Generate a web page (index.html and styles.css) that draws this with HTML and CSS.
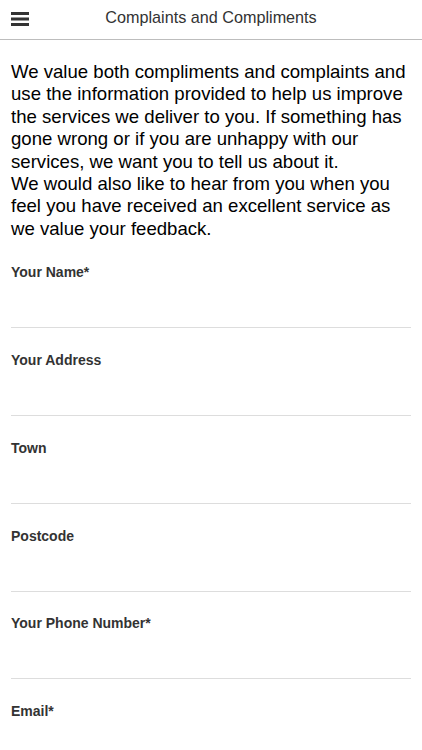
FILE: index.html
```html
<!DOCTYPE html>
<html lang="en">
<head>
<meta charset="utf-8">
<title>Complaints and Compliments</title>
<link rel="stylesheet" href="styles.css">
</head>
<body>
<header class="topbar">
  <button class="menu" aria-label="Menu">
    <svg width="18" height="14" viewBox="0 0 18 14"><rect x="0" y="0" width="18" height="3" fill="#333"/><rect x="0" y="5.5" width="18" height="3" fill="#333"/><rect x="0" y="11" width="18" height="3" fill="#333"/></svg>
  </button>
  <h1 class="title">Complaints and Compliments</h1>
  <span class="spacer"></span>
</header>
<main class="content">
  <p class="intro">We value both compliments and complaints and use the information provided to help us improve the services we deliver to you. If something has gone wrong or if you are unhappy with our services, we want you to tell us about it.<br>We would also like to hear from you when you feel you have received an excellent service as we value your feedback.</p>
  <form class="form">
    <div class="field"><label class="label">Your Name*</label><input class="input" type="text"></div>
    <div class="field"><label class="label">Your Address</label><input class="input" type="text"></div>
    <div class="field"><label class="label">Town</label><input class="input" type="text"></div>
    <div class="field"><label class="label">Postcode</label><input class="input" type="text"></div>
    <div class="field"><label class="label">Your Phone Number*</label><input class="input" type="text"></div>
    <div class="field"><label class="label">Email*</label><input class="input" type="text"></div>
  </form>
</main>
</body>
</html>
```
FILE: styles.css
```css
html, body {
  margin: 0;
  padding: 0;
  background: #fff;
  font-family: "Liberation Sans", Arial, sans-serif;
}
.topbar {
  height: 40px;
  border-bottom: 1px solid #bdbdbd;
  display: grid;
  grid-template-columns: 40px 1fr 40px;
  align-items: center;
  box-sizing: border-box;
}
.menu {
  border: 0;
  background: none;
  padding: 0;
  margin: 0 0 2px 11px;
  width: 18px;
  height: 14px;
  display: flex;
}
.title {
  margin: 0;
  text-align: center;
  font-size: 16.2px;
  font-weight: normal;
  color: #333;
  padding-bottom: 4px;
}
.content {
  padding: 0 11px;
}
.intro {
  margin: 21px 0 0;
  font-size: 18.6px;
  line-height: 22.4px;
  color: #000;
}
.form {
  display: flex;
  flex-direction: column;
  padding-top: 23px;
}
.field {
  display: flex;
  flex-direction: column;
  height: 87.75px;
}
.label {
  font-size: 14px;
  font-weight: bold;
  color: #333;
  line-height: 18px;
}
.input {
  border: 0;
  border-bottom: 1px solid #ddd;
  height: 36px;
  margin-top: 10px;
  padding: 0;
  outline: none;
  font: inherit;
}
```
